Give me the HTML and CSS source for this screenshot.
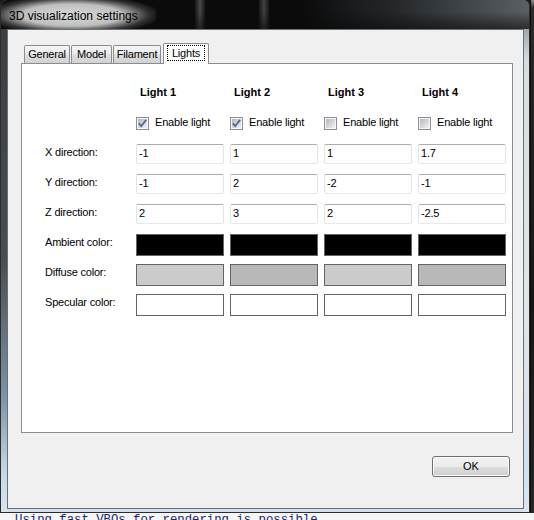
FILE: index.html
```html
<!DOCTYPE html>
<html>
<head>
<meta charset="utf-8">
<link rel="stylesheet" href="styles.css">
</head>
<body>
<div class="screen">
  <div class="desk">
    <div class="window">
      <div class="titlebar"><span class="title">3D visualization settings</span></div>
      <div class="frame-body">
        <div class="client">
          <div class="tabcontrol">
            <div class="tabs">
              <div class="tab t-general">General</div>
              <div class="tab t-model">Model</div>
              <div class="tab t-filament">Filament</div>
              <div class="tab active"><span class="focus">Lights</span></div>
            </div>
            <div class="panel">
              <div class="grid">
                <div></div>
                <div class="head">Light 1</div>
                <div class="head">Light 2</div>
                <div class="head">Light 3</div>
                <div class="head">Light 4</div>

                <div></div>
                <div class="check"><svg class="cb" width="13" height="13" viewBox="0 0 13 13"><defs><linearGradient id="cbg" x1="0" y1="0" x2="1" y2="1"><stop offset="0" stop-color="#b3b8bf"/><stop offset="1" stop-color="#f1f2f3"/></linearGradient></defs><rect x="0.5" y="0.5" width="12" height="12" fill="#f6f6f6" stroke="#8e8f8f"/><rect x="2" y="2" width="9" height="9" fill="url(#cbg)"/><path d="M2.8 6.3 L5.2 9.2 L10.2 2.8" fill="none" stroke="#4b5e92" stroke-width="1.7"/></svg><span>Enable light</span></div>
                <div class="check"><svg class="cb" width="13" height="13" viewBox="0 0 13 13"><rect x="0.5" y="0.5" width="12" height="12" fill="#f6f6f6" stroke="#8e8f8f"/><rect x="2" y="2" width="9" height="9" fill="url(#cbg)"/><path d="M2.8 6.3 L5.2 9.2 L10.2 2.8" fill="none" stroke="#4b5e92" stroke-width="1.7"/></svg><span>Enable light</span></div>
                <div class="check"><svg class="cb" width="13" height="13" viewBox="0 0 13 13"><rect x="0.5" y="0.5" width="12" height="12" fill="#f6f6f6" stroke="#8e8f8f"/><rect x="2" y="2" width="9" height="9" fill="url(#cbg)"/></svg><span>Enable light</span></div>
                <div class="check"><svg class="cb" width="13" height="13" viewBox="0 0 13 13"><rect x="0.5" y="0.5" width="12" height="12" fill="#f6f6f6" stroke="#8e8f8f"/><rect x="2" y="2" width="9" height="9" fill="url(#cbg)"/></svg><span>Enable light</span></div>

                <div class="lbl">X direction:</div>
                <div class="tb">-1</div>
                <div class="tb">1</div>
                <div class="tb">1</div>
                <div class="tb">1.7</div>

                <div class="lbl">Y direction:</div>
                <div class="tb">-1</div>
                <div class="tb">2</div>
                <div class="tb">-2</div>
                <div class="tb">-1</div>

                <div class="lbl">Z direction:</div>
                <div class="tb">2</div>
                <div class="tb">3</div>
                <div class="tb">2</div>
                <div class="tb">-2.5</div>

                <div class="lbl">Ambient color:</div>
                <div class="swatch c-black"></div>
                <div class="swatch c-black"></div>
                <div class="swatch c-black"></div>
                <div class="swatch c-black"></div>

                <div class="lbl">Diffuse color:</div>
                <div class="swatch c-light"></div>
                <div class="swatch c-mid"></div>
                <div class="swatch c-light"></div>
                <div class="swatch c-mid"></div>

                <div class="lbl">Specular color:</div>
                <div class="swatch c-white"></div>
                <div class="swatch c-white"></div>
                <div class="swatch c-white"></div>
                <div class="swatch c-white"></div>
              </div>
            </div>
          </div>
          <div class="actions"><div class="btn">OK</div></div>
        </div>
      </div>
    </div>
    <div class="side"></div>
  </div>
  <div class="console">Using fast VBOs for rendering is possible</div>
</div>
</body>
</html>
```
FILE: styles.css
```css
html, body {
  margin: 0;
  padding: 0;
  background: #1c1c1c;
}

.screen {
  width: 534px;
  height: 520px;
  overflow: hidden;
  display: flex;
  flex-direction: column;
  background: #1c1c1c;
  font-family: "Liberation Sans", Arial, sans-serif;
  font-size: 11px;
  letter-spacing: -0.2px;
  color: #000;
}

.desk {
  display: flex;
  height: 513px;
  flex: none;
}

.window {
  width: 530px;
  height: 513px;
  flex: none;
  display: flex;
  flex-direction: column;
  box-sizing: border-box;
  border-radius: 7px 7px 0 0;
  overflow: hidden;
  border: 1px solid #2a2c2e;
  border-top: none;
  background:
    linear-gradient(to bottom, #3a3c3e 0, #4a4d50 260px, #7f95a6 400px, #c5d6e3 470px, #d8e5ee 512px) left top / 7px 100% no-repeat,
    linear-gradient(to bottom, #6d7276 0, #d9dcdf 60px, #e2e5e8 300px, #d2e0ea 470px, #dbe7f0 512px) right top / 6px 100% no-repeat,
    #d4e1eb;
}

.titlebar {
  height: 29px;
  flex: none;
  margin: 0 -1px;
  background:
    linear-gradient(to bottom, rgba(0,0,0,0) 0, rgba(0,0,0,0) 40%, rgba(10,10,10,0.6) 100%),
    linear-gradient(to right, transparent 194px, rgba(150,150,150,0.45) 200px, transparent 206px),
    linear-gradient(to right, transparent 258px, rgba(150,150,150,0.4) 264px, transparent 270px),
    linear-gradient(to right, #0c0c0c 0, #0a0a0a 300px, #262a2d 400px, #464b4f 480px, #5b6064 530px);
}

.title {
  display: inline-block;
  height: 29px;
  box-sizing: border-box;
  padding: 9px 18px 0 9px;
  font-size: 12px;
  letter-spacing: 0;
  line-height: 14px;
  color: #000;
  background: radial-gradient(90px 20px at 72px 15px, rgba(225,225,225,0.97) 0, rgba(210,210,210,0.9) 55%, rgba(130,130,130,0.35) 84%, rgba(0,0,0,0) 100%);
}

.frame-body {
  display: flex;
  padding: 0 5px 0 6px;
  flex: none;
}

.client {
  width: 517px;
  height: 480px;
  box-sizing: border-box;
  border: 1px solid #66727b;
  background: #f0f0f0;
  padding: 13px 10px 0 13px;
  display: flex;
  flex-direction: column;
}

.tabcontrol {
  width: 492px;
  display: flex;
  flex-direction: column;
}

.tabs {
  display: flex;
  align-items: flex-end;
  height: 21px;
  margin-bottom: -1px;
  padding-left: 3px;
  position: relative;
  z-index: 1;
}

.tab {
  height: 18px;
  box-sizing: border-box;
  margin-bottom: 1px;
  margin-right: 1px;
  border: 1px solid #898c95;
  border-bottom: none;
  border-radius: 2px 2px 0 0;
  background: linear-gradient(to bottom, #f4f4f4 0, #ececec 45%, #dedede 55%, #d2d2d2 100%);
  text-align: center;
  padding-top: 2px;
  line-height: 13px;
}

.t-general { width: 46px; }
.t-model { width: 41px; }
.t-filament { width: 48px; margin-right: 2px; }

.tab.active {
  width: 46px;
  height: 21px;
  margin-bottom: 0;
  background: #fff;
  padding-top: 1px;
}

.focus {
  display: inline-block;
  height: 16px;
  box-sizing: border-box;
  border: 1px dotted #000;
  padding: 0 4px;
  line-height: 14px;
}

.panel {
  height: 370px;
  box-sizing: border-box;
  border: 1px solid #898c95;
  background: #fff;
  padding: 22px 0 0 23px;
}

.grid {
  display: grid;
  grid-template-columns: 85px repeat(4, 88px);
  grid-template-rows: 30px 28px repeat(6, 30px);
  column-gap: 6px;
  align-items: start;
}

.head {
  font-weight: bold;
  line-height: 13px;
  padding-left: 4px;
  letter-spacing: 0;
}

.check {
  display: flex;
  align-items: flex-start;
  line-height: 13px;
}

.cb {
  display: block;
  margin-top: 1px;
  margin-right: 6px;
  flex: none;
}

.lbl {
  line-height: 13px;
  padding-top: 2px;
  white-space: nowrap;
}

.tb {
  height: 20px;
  box-sizing: border-box;
  border: 1px solid #dfe3ea;
  border-top-color: #abadb3;
  border-bottom-color: #e3e9ef;
  border-radius: 2px;
  background: #fff;
  padding: 2px 2px 0 2px;
  line-height: 13px;
}

.swatch {
  height: 22px;
  box-sizing: border-box;
  border: 1px solid #646464;
}

.c-black { background: #000; }
.c-light { background: #cbcbcb; }
.c-mid { background: #b8b8b8; }
.c-white { background: #fff; }

.actions {
  display: flex;
  justify-content: flex-end;
  padding-right: 3px;
  margin-top: 23px;
}

.btn {
  width: 78px;
  height: 21px;
  box-sizing: border-box;
  border: 1px solid #707070;
  border-radius: 3px;
  background: linear-gradient(to bottom, #f2f2f2 0, #ebebeb 50%, #dddddd 51%, #cfcfcf 100%);
  box-shadow: inset 0 0 0 1px #fbfbfb;
  display: flex;
  align-items: center;
  justify-content: center;
  line-height: 13px;
  letter-spacing: 0;
}

.side {
  flex: 1;
  background: linear-gradient(to bottom, #8a8a8a 0, #2b2b2b 8px, #161616 300px, #262626 520px);
  border-left: 1px solid #0d0d0d;
}

.console {
  height: 7px;
  flex: none;
  overflow: hidden;
  background: #f6f6f6;
  font-family: "Liberation Mono", "Courier New", monospace;
  font-size: 12.3px;
  letter-spacing: 0;
  line-height: 14px;
  color: #1c2270;
  padding-left: 15px;
  white-space: nowrap;
}
```
